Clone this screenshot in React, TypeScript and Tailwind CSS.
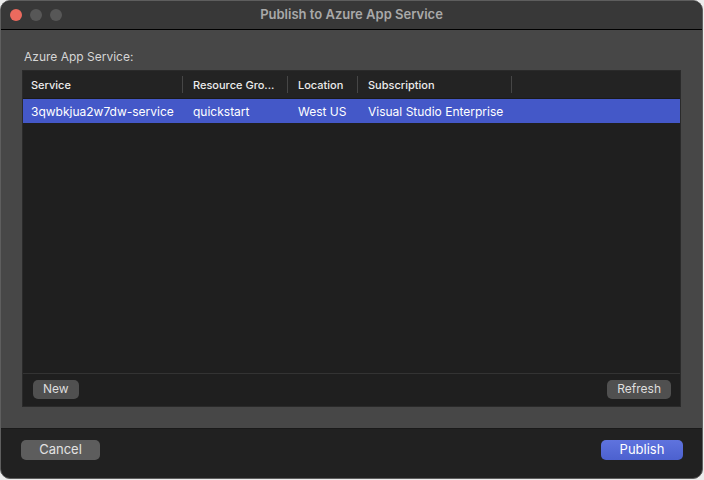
import React from 'react';

interface Servico {
  nome: string;
  grupo: string;
  local: string;
  assinatura: string;
}

const colunas = [
  { titulo: 'Service', largura: 'w-[159px]' },
  { titulo: 'Resource Gro...', largura: 'w-[105px]' },
  { titulo: 'Location', largura: 'w-[70px]' },
  { titulo: 'Subscription', largura: 'w-[154px]' },
];

const servicos: Servico[] = [
  { nome: '3qwbkjua2w7dw-service', grupo: 'quickstart', local: 'West US', assinatura: 'Visual Studio Enterprise' },
];

const App = () => {
  return (
    <div
      className='w-[704px] h-[480px] bg-[#ececec]'
      style={{ fontFamily: 'Inter, "Noto Sans", "Liberation Sans", sans-serif' }}
    >
      <div className='w-[703px] h-[479px] rounded-[10px] border border-[#5e5e5e] overflow-hidden flex flex-col bg-[#212121]'>
        {/* barra de título */}
        <div className='relative h-[29px] shrink-0 bg-[#383838] border-b border-black flex items-center'>
          <div className='flex gap-[8px] pl-[9px]'>
            <span className='w-[12px] h-[12px] rounded-full bg-[#ec6a5e]' />
            <span className='w-[12px] h-[12px] rounded-full bg-[#575757]' />
            <span className='w-[12px] h-[12px] rounded-full bg-[#575757]' />
          </div>
          <div className='absolute inset-0 flex items-center justify-center text-[13px] font-semibold text-[#a9a9a9]'>
            Publish to Azure App Service
          </div>
        </div>

        {/* conteúdo */}
        <div className='h-[399px] shrink-0 bg-[#474747] border-b border-[#1a1a1a] px-[21px] pt-[19px] flex flex-col'>
          <div className='text-[12px] text-[#d6d6d6] leading-[16px] mb-[5px] pl-[2px]'>Azure App Service:</div>

          <div className='h-[337px] bg-[#1f1f1f] border border-[#2a2a2a] flex flex-col'>
            <div className='h-[28px] shrink-0 bg-[#232323] flex items-center border-b border-[#1a1a1a]'>
              {colunas.map((c, i) => (
                <div key={c.titulo} className={`${c.largura} shrink-0 h-full flex items-center`}>
                  {i > 0 && <div className='w-px h-[17px] bg-[#464646]' />}
                  <span className={`${i > 0 ? 'pl-[10px]' : 'pl-[8px]'} whitespace-nowrap text-[11px] font-medium text-[#ececec] pt-[1px]`}>
                    {c.titulo}
                  </span>
                </div>
              ))}
              <div className='w-px h-[17px] bg-[#464646]' />
            </div>

            {servicos.map((s) => (
              <div key={s.nome} className='h-[24px] shrink-0 bg-[#4458c8] flex items-center text-[12px] text-white whitespace-nowrap pt-[1px]'>
                <span className='w-[159px] shrink-0 pl-[8px]'>{s.nome}</span>
                <span className='w-[105px] shrink-0 pl-[11px]'>{s.grupo}</span>
                <span className='w-[70px] shrink-0 pl-[11px]'>{s.local}</span>
                <span className='w-[154px] shrink-0 pl-[11px]'>{s.assinatura}</span>
              </div>
            ))}

            <div className='flex-1' />

            <div className='h-[33px] shrink-0 border-t border-[#333333] flex items-center justify-between pl-[10px] pr-[9px] pb-[2px]'>
              <button className='h-[19px] px-[10px] rounded-[5px] bg-[#505050] text-[12px] text-[#dedede]'>New</button>
              <button className='h-[19px] px-[10px] rounded-[5px] bg-[#505050] text-[12px] text-[#dedede]'>Refresh</button>
            </div>
          </div>
        </div>

        {/* rodapé */}
        <div className='flex-1 flex items-start justify-between pl-[20px] pr-[19px] pt-[11px]'>
          <button className='w-[79px] h-[20px] rounded-[5px] bg-[#5d5d5d] text-[13px] text-[#e2e2e2]'>Cancel</button>
          <button className='w-[82px] h-[20px] rounded-[5px] bg-gradient-to-b from-[#5f73de] to-[#4c61cf] text-[13px] text-white'>Publish</button>
        </div>
      </div>
    </div>
  );
};

export default App;
